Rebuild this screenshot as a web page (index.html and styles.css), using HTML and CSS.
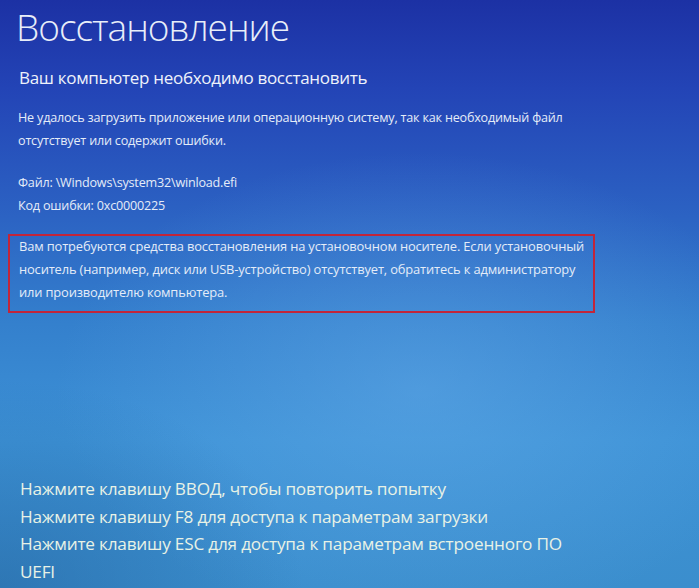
FILE: index.html
```html
<!DOCTYPE html>
<html lang="ru">
<head>
<meta charset="utf-8">
<link rel="stylesheet" href="styles.css">
</head>
<body>
<div class="screen">
  <div class="top">
    <h1 class="title">Восстановление</h1>
    <h2 class="subtitle">Ваш компьютер необходимо восстановить</h2>
    <p class="para">Не удалось загрузить приложение или операционную систему, так как необходимый файл<br>отсутствует или содержит ошибки.</p>
    <p class="para file">Файл: \Windows\system32\winload.efi<br>Код ошибки: 0xc0000225</p>
    <div class="box">
      <p class="para small">Вам потребуются средства восстановления на установочном носителе. Если установочный<br>носитель (например, диск или USB-устройство) отсутствует, обратитесь к администратору<br>или производителю компьютера.</p>
    </div>
  </div>
  <div class="keys">
    <div>Нажмите клавишу ВВОД, чтобы повторить попытку</div>
    <div>Нажмите клавишу F8 для доступа к параметрам загрузки</div>
    <div>Нажмите клавишу ESC для доступа к параметрам встроенного ПО</div>
    <div>UEFI</div>
  </div>
</div>
</body>
</html>
```
FILE: styles.css
```css
html, body {
  margin: 0;
  padding: 0;
  width: 699px;
  height: 588px;
  overflow: hidden;
}
body {
  font-family: "Open Sans", "Noto Sans", sans-serif;
  color: #e9eef8;
}
.screen {
  width: 699px;
  height: 588px;
  box-sizing: border-box;
  display: flex;
  flex-direction: column;
  justify-content: space-between;
  padding: 0 0 3px 0;
  background:
    radial-gradient(ellipse 380px 260px at 0px 588px, rgba(30, 90, 150, 0.45), rgba(30, 90, 150, 0) 80%),
    radial-gradient(ellipse 520px 340px at 420px 390px, rgba(105, 175, 235, 0.45), rgba(105, 175, 235, 0) 70%),
    linear-gradient(180deg, #1c31a4 0%, #2344b6 15%, #2b60c2 35%, #3480cd 55%, #3d92d6 75%, #3b8ecd 100%);
}
.top {
  display: flex;
  flex-direction: column;
}
.title {
  margin: 2px 0 0 16px;
  font-weight: 300;
  font-size: 37px;
  line-height: 50px;
  letter-spacing: -1px;
  color: #e8eef9;
}
.subtitle {
  margin: 14px 0 0 19px;
  font-weight: 400;
  font-size: 17px;
  line-height: 24px;
  letter-spacing: -0.3px;
  color: #eef2fb;
}
.para {
  margin: 16px 0 0 18px;
  font-size: 12.6px;
  line-height: 23px;
  letter-spacing: -0.2px;
  color: #e4ecf8;
}
.para.file {
  margin-top: 19px;
}
.box {
  margin: 17px 0 0 8px;
  width: 587px;
  height: 79px;
  box-sizing: border-box;
  border: 2px solid #c2253a;
  padding: 0;
}
.box .para {
  margin: -1px 0 0 9px;
  font-size: 12.9px;
  letter-spacing: -0.15px;
}
.keys {
  margin-left: 20px;
  font-size: 17.2px;
  line-height: 27.5px;
  color: #e8f2e6;
  letter-spacing: -0.2px;
}
```
